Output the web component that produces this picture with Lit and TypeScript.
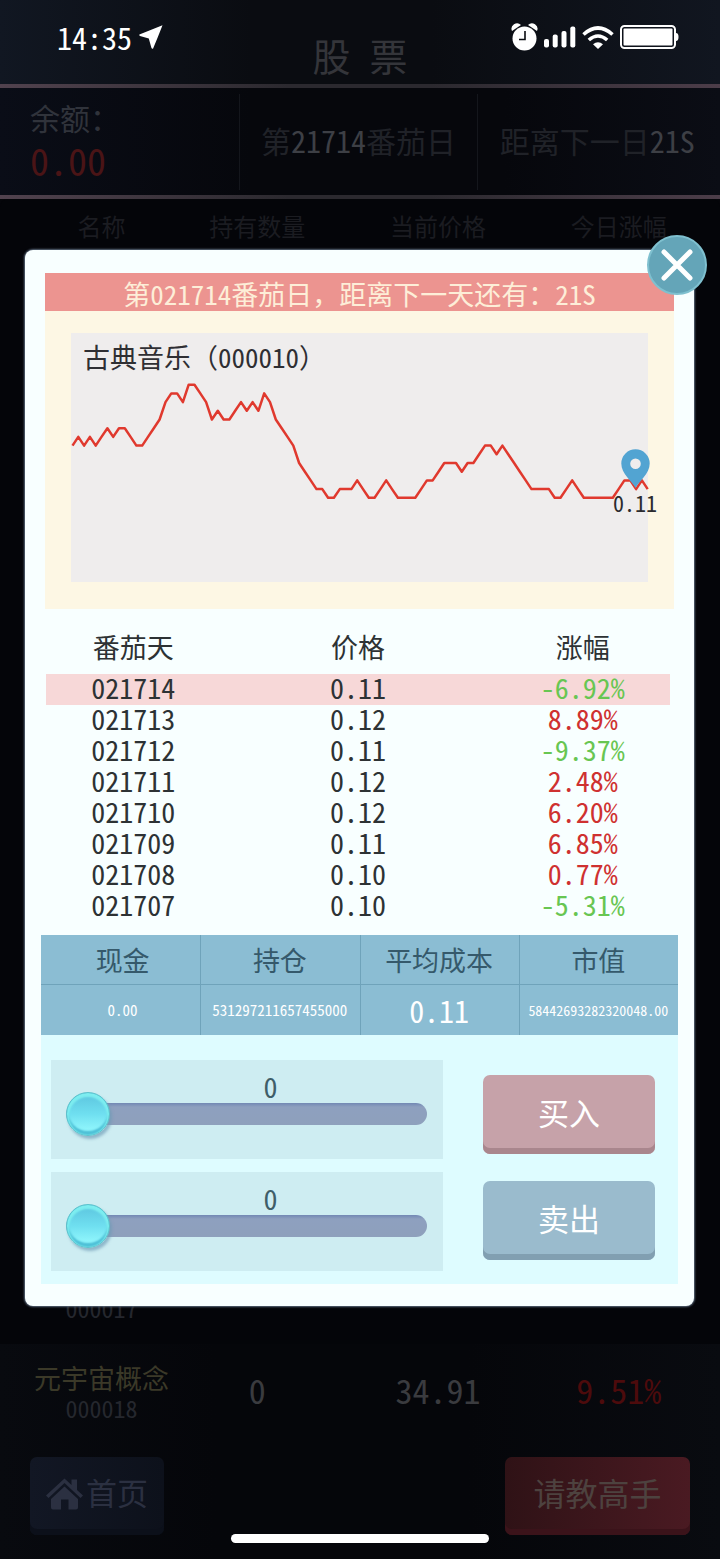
import { LitElement, html, css, svg } from "lit";
import { customElement, property, state } from "lit/decorators.js";
import { classMap } from "lit/directives/class-map.js";

const FONT = css`"Noto Sans CJK SC", "Noto Sans", sans-serif`;

/* Full-width punctuation stays full width; digits inside use half-width forms. */
const mixedWidths = css`
  .wide { font-feature-settings: normal; }
  .half { font-feature-settings: "hwid"; }
`;

/* Price level of every trading day, oldest first. */
const LEVELS = [
  6, 7, 6, 7, 6, 7, 8, 7, 8, 8, 7, 6, 6, 7, 8, 9, 11, 12, 12, 11,
  13, 13, 12, 11, 9, 10, 9, 9, 10, 11, 10, 11, 10, 12, 11, 9, 8, 7, 6, 4,
  3, 2, 1, 1, 0, 0, 1, 1, 1, 2, 1, 0, 0, 1, 2, 1, 0, 0, 0, 0,
  1, 2, 2, 3, 4, 4, 4, 3, 4, 4, 5, 6, 6, 5, 6, 5, 4, 3, 2, 1,
  1, 1, 1, 0, 0, 1, 2, 1, 0, 0, 0, 0, 0, 0, 1, 2, 2, 1, 2, 1,
];

const HISTORY: [string, string, string][] = [
  ["021714", "0.11", "-6.92%"],
  ["021713", "0.12", "8.89%"],
  ["021712", "0.11", "-9.37%"],
  ["021711", "0.12", "2.48%"],
  ["021710", "0.12", "6.20%"],
  ["021709", "0.11", "6.85%"],
  ["021708", "0.10", "0.77%"],
  ["021707", "0.10", "-5.31%"],
];

@customElement("status-icons")
class StatusIcons extends LitElement {
  static styles = css`
    :host { display: flex; align-items: center; gap: 6px; }
    svg { display: block; }
  `;
  render() {
    return html`
      <svg width="27" height="28" viewBox="0 0 27 28" aria-label="闹钟">
        <path d="M1 8A5.500 5.500 0 0 1 10 2Z M26 8A5.500 5.500 0 0 0 17 2Z" fill="#fff" />
        <circle cx="13.500" cy="15.500" r="12" fill="#fff" />
        <path d="M14 8V16.500H8" fill="none" stroke="#0a0c11" stroke-width="1.600" />
      </svg>
      <svg width="32" height="22" viewBox="0 0 32 22" aria-label="信号">
        <g fill="#fff">
          <rect x="0" y="13" width="5" height="8.500" rx="2" />
          <rect x="8.700" y="8.500" width="5" height="13" rx="2" />
          <rect x="17.500" y="5" width="5" height="16.500" rx="2" />
          <rect x="26.300" y="0.500" width="5" height="21" rx="2" />
        </g>
      </svg>
      <svg width="32" height="23" viewBox="0 0 32 23" aria-label="无线网络">
        <g fill="none" stroke="#fff" stroke-width="3.600">
          <path d="M1.500 8.500Q16 -4.500 30.500 8.500" />
          <path d="M6.800 14Q16 6 25.200 14" />
        </g>
        <path d="M11 18.300Q16 14 21 18.300L16 23Z" fill="#fff" />
      </svg>
      <svg width="59" height="24" viewBox="0 0 59 24" aria-label="电量">
        <rect x="1" y="1" width="54" height="22" rx="3.500" fill="none" stroke="#fff" stroke-width="2" />
        <rect x="3.500" y="3.500" width="49" height="17" rx="1" fill="#fff" />
        <path d="M56 8Q58.500 8 58.500 12T56 16Z" fill="#fff" />
      </svg>
    `;
  }
}

@customElement("price-chart")
class PriceChart extends LitElement {
  static styles = [mixedWidths, css`
    :host { display: grid; background: #efeded; }
    .title, svg { grid-area: 1 / 1; }
    .title {
      margin: 0;
      padding: 6px 12px;
      font-size: 27px;
      line-height: 36px;
      font-weight: 400;
      color: #2f2f33;
    }
    svg { display: block; width: 100%; overflow: visible; }
    .line { fill: none; stroke: #e0392e; stroke-width: 2.500; stroke-linejoin: round; }
    .pin { fill: #52a4d2; }
    .price { font-size: 22px; fill: #2b2b2e; text-anchor: middle; }
  `];
  render() {
    const points = LEVELS.map(
      (l, i) => `${(1.5 + i * 5.81).toFixed(1)},${(164.8 - l * 8.7).toFixed(1)}`
    ).join(" ");
    return html`
      <h2 class="title wide">古典音乐（<span class="half">000010</span>）</h2>
      <svg viewBox="0 0 577 249" role="img" aria-label="价格走势">
        ${svg`
          <polyline class="line" points=${points} />
          <path class="pin" fill-rule="evenodd"
            d="M564.500 155C561 148 550.300 141 550.300 130.500A14.200 14.200 0 0 1 578.700 130.500C578.700 141 568 148 564.500 155ZM564.500 125.500A5.300 5.300 0 1 0 564.500 136.100A5.300 5.300 0 1 0 564.500 125.500Z" />
          <text class="price" x="564" y="179">0.11</text>`}
      </svg>
    `;
  }
}

@customElement("amount-slider")
class AmountSlider extends LitElement {
  @property() name = "";
  @state() private value = 0;
  static styles = css`
    :host {
      display: flex;
      flex-direction: column;
      box-sizing: border-box;
      height: 99px;
      padding: 12px 16px 0 15px;
      background: #ceedf2;
    }
    .amount {
      padding: 0 0 3px 48px;
      font-size: 28px;
      line-height: 28px;
      text-align: center;
      color: #3f5e69;
    }
    .range {
      appearance: none;
      -webkit-appearance: none;
      display: block;
      width: 100%;
      height: 22px;
      margin: 0;
      border-radius: 11px;
      background: linear-gradient(#7288b4 0, #8ea0bf 4px, #8ea0bc 100%);
    }
    .range::-webkit-slider-thumb {
      -webkit-appearance: none;
      width: 44px;
      height: 44px;
      border-radius: 50%;
      border: 1px solid #5cc3cd;
      background: linear-gradient(#5cc4de, #6fdff0 50%, #8df4fb 85%);
      box-shadow: inset 0 2px 2px 2px #7deef0, inset 0 -3px 2px 1px #4dbfd6, 2px 3px 3px #6d9bb5aa;
    }
  `;
  render() {
    return html`
      <label class="amount" for="range"><output>${this.value}</output></label>
      <input class="range" id="range" type="range" min="0" max="100" aria-label=${this.name}
        .value=${String(this.value)}
        @input=${(e: Event) => (this.value = Number((e.target as HTMLInputElement).value))} />
    `;
  }
}

@customElement("trade-dialog")
class TradeDialog extends LitElement {
  static styles = [mixedWidths, css`
    :host {
      display: block;
      position: relative;
      box-sizing: border-box;
      padding: 23px 16px 22px;
      border-radius: 8px;
      background: #f8ffff;
      box-shadow: 0 0 2px 1px #5c6a7c;
    }
    .close {
      position: absolute;
      top: -15px;
      right: -13px;
      width: 60px;
      height: 60px;
      padding: 0;
      border: 2px solid #7fc0cf;
      border-radius: 50%;
      background: #64a5b8;
    }
    .close svg { display: block; width: 56px; height: 56px; }
    .market { margin: 0 4px; background: #fdf7e4; }
    .banner {
      margin: 0;
      padding-top: 4px;
      font-size: 27px;
      line-height: 34px;
      text-align: center;
      background: #ec9490;
      color: #fdeed8;
    }
    .banner, .history, .assets { font-weight: 400; }
    .plot { padding: 22px 26px 27px; }
    table { width: 100%; border-collapse: collapse; table-layout: fixed; }
    th, td { padding: 0; font-weight: 400; text-align: center; }
    .history-wrap { margin: 15px 8px 13px 5px; }
    .history { color: #2d3234; }
    .history th { padding-bottom: 4px; font-size: 27px; line-height: 46px; }
    .history td { padding-bottom: 4px; font-size: 28px; line-height: 27px; }
    .side { width: 28%; }
    .today { background: #f7d8d8; }
    .up { color: #cf3130; }
    .down { color: #68c652; }
    .assets { background: #8bbdd3; }
    .assets th, .assets td { height: 50px; }
    .assets th + th, .assets td + td { box-shadow: inset 1px 0 #6fa3ba; }
    .assets th:first-child, .assets td:first-child { padding-left: 4px; }
    .assets thead { background: linear-gradient(#6fa3ba, #6fa3ba) bottom / 100% 1px no-repeat; }
    .assets th { font-size: 27px; line-height: 48px; color: #35596b; }
    .assets td { font-size: 15px; line-height: 50px; color: #fff; }
    .assets .long { font-size: 14px; }
    .assets .large { font-size: 30px; }
    .trade {
      display: grid;
      grid-template-columns: minmax(0, 392px) 172px;
      justify-content: start;
      column-gap: 40px;
      padding: 25px 10px 13px;
      background: #defcff;
    }
    .sliders { display: flex; flex-direction: column; gap: 13px; }
    .actions { display: flex; flex-direction: column; gap: 27px; padding-top: 15px; }
    .act {
      height: 79px;
      padding: 0 0 6px;
      border: 0;
      border-radius: 7px;
      font-family: ${FONT};
      font-size: 31px;
      line-height: 68px;
      color: #fff;
    }
    .buy { background: #c6a2a9; box-shadow: inset 0 -6px #a9868d; }
    .sell { background: #9abbcd; box-shadow: inset 0 -6px #819fb1; }
  `];
  render() {
    return html`
      <section class="market">
        <h1 class="banner wide">第<span class="half">021714</span>番茄日，距离下一天还有：<span class="half">21S</span></h1>
        <div class="plot"><price-chart></price-chart></div>
      </section>
      <div class="history-wrap">
        <table class="history">
          <thead>
            <tr><th class="side">番茄天</th><th>价格</th><th class="side">涨幅</th></tr>
          </thead>
          <tbody>
            ${HISTORY.map(([day, price, change], i) => {
              const down = change.startsWith("-");
              return html`<tr class=${classMap({ today: i === 0 })}>
                <td>${day}</td><td>${price}</td>
                <td class=${classMap({ down, up: !down })}>${change}</td>
              </tr>`;
            })}
          </tbody>
        </table>
      </div>
      <table class="assets">
        <thead><tr><th>现金</th><th>持仓</th><th>平均成本</th><th>市值</th></tr></thead>
        <tbody>
          <tr>
            <td>0.00</td><td>531297211657455000</td><td class="large">0.11</td>
            <td class="long">58442693282320048.00</td>
          </tr>
        </tbody>
      </table>
      <div class="trade">
        <div class="sliders">
          <amount-slider name="买入数量"></amount-slider>
          <amount-slider name="卖出数量"></amount-slider>
        </div>
        <div class="actions">
          <button class="act buy">买入</button>
          <button class="act sell">卖出</button>
        </div>
      </div>
      <button class="close" aria-label="关闭">
        <svg viewBox="0 0 56 56"><path d="M15 15L41 41M41 15L15 41" stroke="#fff" stroke-width="5" stroke-linecap="round" /></svg>
      </button>
    `;
  }
}

@customElement("app-root")
class AppRoot extends LitElement {
  static styles = [mixedWidths, css`
    :host {
      display: grid;
      min-height: 100vh;
      font-family: ${FONT};
      font-feature-settings: "hwid";
      background: #05060a;
    }
    .page, .overlay { grid-area: 1 / 1; min-width: 0; }
    .page { display: flex; flex-direction: column; }
    .overlay { padding: 250px 26px 0 25px; }
    .top {
      display: grid;
      grid-template-columns: 1fr auto 1fr;
      height: 84px;
      background: linear-gradient(90deg, #111722, #0a0c11 35%, #0a0c11 60%, #111620);
    }
    .clock {
      display: flex;
      align-items: center;
      align-self: start;
      gap: 7px;
      height: 73px;
      padding-left: 57px;
      font-size: 30px;
      color: #fff;
    }
    .title {
      margin: 0;
      padding-top: 31px;
      font-size: 38px;
      line-height: 48px;
      font-weight: 400;
      color: #34353a;
    }
    .icons { justify-self: end; align-self: start; height: 74px; padding-right: 41px; }
    .rule { height: 4px; background: linear-gradient(90deg, #51424e, #2b292f 40%, #2b292f 60%, #4c3d49); }
    .stats {
      display: grid;
      grid-template-columns: 1fr 1fr 1fr;
      align-items: center;
      height: 107px;
      padding-right: 4px;
      font-size: 30px;
      line-height: 40px;
      color: #202228;
      background: linear-gradient(90deg, #0a0d17, #06070c 35%, #06070c 70%, #0b0d15);
    }
    .stat {
      box-sizing: border-box;
      display: flex;
      flex-direction: column;
      justify-content: center;
      height: 96px;
      padding-bottom: 4px;
      text-align: center;
      white-space: nowrap;
    }
    .stat + .stat { border-left: 1px solid #14161c; }
    .balance { padding-left: 30px; text-align: left; color: #30333b; }
    .money { font-size: 38px; line-height: 46px; color: #4a1416; }
    .num { color: #3d3f45; }
    .cols, .row {
      display: grid;
      grid-template-columns: 131px 1fr 1fr 1fr;
      align-items: center;
      text-align: center;
      padding: 0 11px 0 36px;
      white-space: nowrap;
    }
    .cols { height: 45px; padding-top: 4px; font-size: 24px; color: #1b1c21; }
    .list {
      flex: 1;
      display: flex;
      flex-direction: column;
      border-radius: 8px 8px 0 0;
      background: #040509;
    }
    .rows { flex: 1; display: flex; flex-direction: column; justify-content: flex-end; }
    .row { height: 100px; font-size: 34px; line-height: 40px; color: #3a3b3f; }
    .row.last, .foot { background: linear-gradient(90deg, #080a0f, #05060a 30%, #05060a 65%, #090b10); }
    .value { padding-bottom: 8px; }
    .id {
      display: flex;
      flex-direction: column;
      align-items: center;
      align-self: end;
      padding-bottom: 21px;
      line-height: 31px;
    }
    .name { font-size: 27px; color: #3b3928; }
    .code { font-size: 24px; line-height: 30px; color: #25272e; }
    .gain { color: #4d0b0c; }
    .foot {
      display: grid;
      grid-template-columns: 1fr auto 1fr;
      height: 102px;
      padding: 13px 30px 0;
    }
    .nav {
      display: flex;
      align-items: center;
      justify-content: center;
      box-sizing: border-box;
      height: 78px;
      padding: 0 0 9px;
      border: 0;
      border-radius: 7px;
      font-family: ${FONT};
    }
    .home {
      width: 134px;
      gap: 3px;
      text-decoration: none;
      font-size: 31px;
      color: #2b3041;
      background: linear-gradient(90deg, #121724, #0d111b);
      box-shadow: inset 0 -6px #0c101a;
    }
    .home svg { padding-top: 5px; }
    .ask {
      justify-self: end;
      width: 185px;
      font-size: 32px;
      color: #4d423f;
      background: linear-gradient(90deg, #2f1216, #4a1a22);
      box-shadow: inset 0 -6px #3b131a;
    }
    .indicator {
      align-self: end;
      width: 258px;
      height: 9px;
      margin-bottom: 16px;
      border-radius: 5px;
      background: #fff;
    }
  `];
  render() {
    return html`
      <div class="page">
        <header class="top">
          <div class="clock">
            14:35
            <svg width="24" height="24" viewBox="0 0 24 24" aria-hidden="true">
              <path d="M23.500 0.300Q19 12 14 23.700Q12.800 24 12.300 22.500L9.800 13.400L1 10.900Q-0.500 10 1 9.300Z" fill="#fff" />
            </svg>
          </div>
          <h1 class="title">股&ensp;票</h1>
          <status-icons class="icons"></status-icons>
        </header>
        <div class="rule"></div>
        <section class="stats">
          <div class="stat balance"><span class="wide">余额：</span><span class="money">0.00</span></div>
          <div class="stat"><span>第<span class="num">21714</span>番茄日</span></div>
          <div class="stat"><span>距离下一日<span class="num">21S</span></span></div>
        </section>
        <div class="rule"></div>
        <main class="list">
          <div class="cols"><span>名称</span><span>持有数量</span><span>当前价格</span><span>今日涨幅</span></div>
          <div class="rows">
            <div class="row"><div class="id"><span class="code">000017</span></div></div>
            <div class="row last">
              <div class="id"><span class="name">元宇宙概念</span><span class="code">000018</span></div>
              <span class="value">0</span><span class="value">34.91</span><span class="value gain">9.51%</span>
            </div>
          </div>
        </main>
        <footer class="foot">
          <a class="nav home" href="#home">
            <svg width="37" height="32" viewBox="0 0 37 32" aria-hidden="true">
              <g fill="#2b3041">
                <path d="M18.500 0.500L25.500 7V1.500H31V12L37 17.500L34.500 20L18.500 5L2.500 20L0 17.500Z" />
                <path d="M18.500 8.500L32 21V29.500Q32 31.500 30 31.500H22.500V21.500H15V31.500H7Q5 31.500 5 29.500V21Z" />
              </g>
            </svg>首页</a>
          <div class="indicator"></div>
          <button class="nav ask">请教高手</button>
        </footer>
      </div>
      <div class="overlay"><trade-dialog></trade-dialog></div>
    `;
  }
}
